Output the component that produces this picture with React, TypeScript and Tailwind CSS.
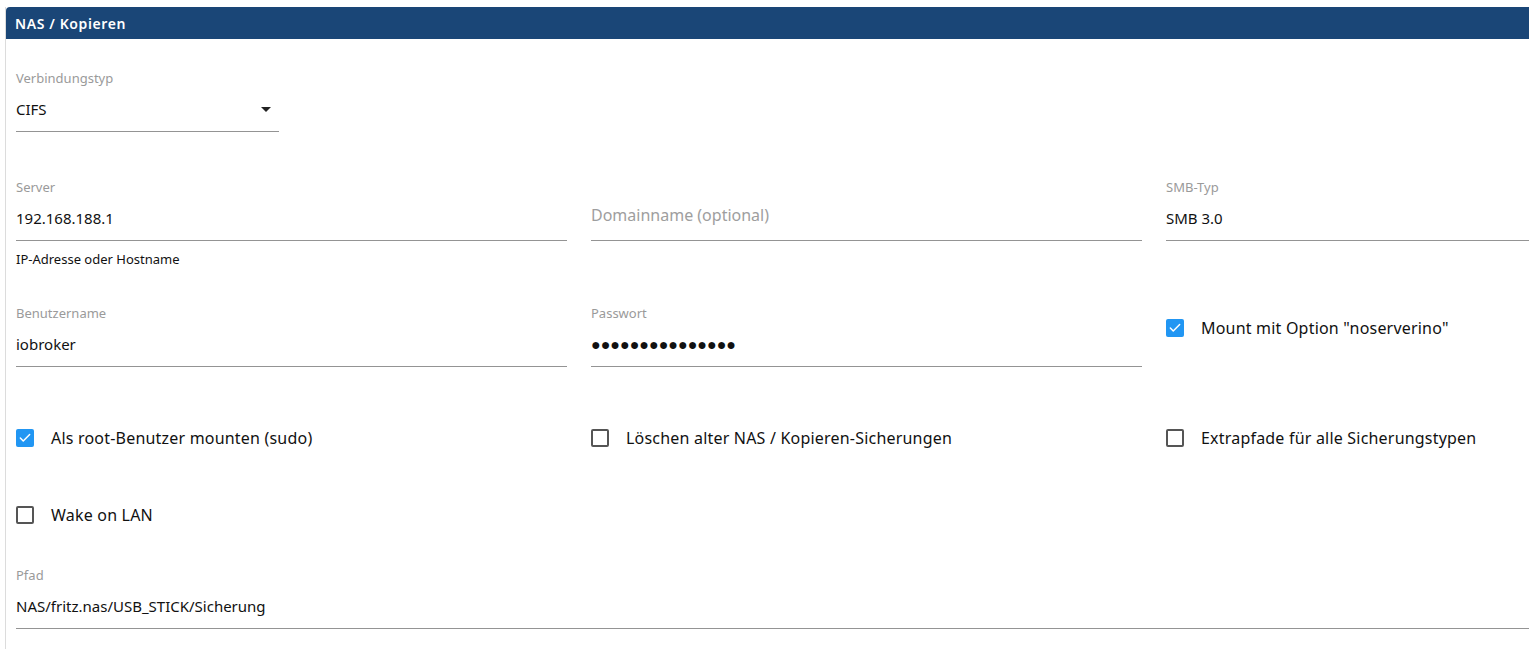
import { Check } from 'lucide-react';

const font = { fontFamily: '"Noto Sans", "Open Sans", Arial, sans-serif' };

function Field({
  label,
  value,
  placeholder,
  helper,
  select,
  valueClass,
}: {
  label?: string;
  value?: string;
  placeholder?: string;
  helper?: string;
  select?: boolean;
  valueClass?: string;
}) {
  return (
    <div className="w-full">
      {placeholder ? (
        <div className="h-[62px] border-b border-[#949494] pt-[26px]">
          <div className="h-5 leading-5 text-[16px] text-[#9e9e9e]">{placeholder}</div>
        </div>
      ) : (
        <>
          <div className="h-4 leading-4 text-[13px] text-[#9a9a9a]">{label}</div>
          <div
            className={`relative mt-[15px] h-4 leading-4 pb-[14px] box-content border-b border-[#949494] text-[#111] ${
              valueClass ?? 'text-[15px]'
            }`}
          >
            {value}
            {select && (
              <svg viewBox="0 0 24 24" className="absolute right-[1px] top-[-4px] w-6 h-6 fill-[#222]">
                <path d="M7 10l5 5 5-5z" />
              </svg>
            )}
          </div>
        </>
      )}
      {helper && <div className="mt-[10px] h-4 leading-4 text-[13px] text-[#111]">{helper}</div>}
    </div>
  );
}

function Box({ label, checked }: { label: string; checked?: boolean }) {
  return (
    <div className="flex items-center h-6">
      <div className="w-6 flex items-center justify-center">
        {checked ? (
          <div className="w-[18px] h-[18px] rounded-[2px] bg-[#2196f3] flex items-center justify-center">
            <Check size={14} strokeWidth={2.5} className="text-white" />
          </div>
        ) : (
          <div className="w-[18px] h-[18px] rounded-[2px] border-2 border-[#555]" />
        )}
      </div>
      <span className="ml-[14px] text-[16px] tracking-[0.2px] text-[#111]">{label}</span>
    </div>
  );
}

export default function App() {
  return (
    <div className="w-full min-h-[649px] bg-white overflow-hidden pt-[7px]" style={font}>
      <div className="w-[1740px] ml-[5px] border-l border-[#dcdcdc] min-h-[642px]">
        <div className="h-8 bg-[#1a4677] rounded-tl-[4px] flex items-center pl-[9px]">
          <span className="text-white text-[14px] font-semibold tracking-[0.6px]">NAS / Kopieren</span>
        </div>

        <div className="pl-[10px] pt-[31px]">
          <div className="w-[263px]">
            <Field label="Verbindungstyp" value="CIFS" select />
          </div>

          <div className="grid grid-cols-[551px_551px_551px] gap-x-6 mt-[47px]">
            <Field label="Server" value="192.168.188.1" helper="IP-Adresse oder Hostname" />
            <Field placeholder="Domainname (optional)" />
            <Field label="SMB-Typ" value="SMB 3.0" />
          </div>

          <div className="grid grid-cols-[551px_551px_551px] gap-x-6 mt-[38px]">
            <Field label="Benutzername" value="iobroker" />
            <Field label="Passwort" value="●●●●●●●●●●●●●●●" valueClass="text-[16px]" />
            <div className="pt-[11px] -ml-[3px]">
              <Box label={'Mount mit Option "noserverino"'} checked />
            </div>
          </div>

          <div className="grid grid-cols-[551px_551px_551px] gap-x-6 mt-[59px] -ml-[3px]">
            <Box label="Als root-Benutzer mounten (sudo)" checked />
            <Box label="Löschen alter NAS / Kopieren-Sicherungen" />
            <Box label="Extrapfade für alle Sicherungstypen" />
          </div>

          <div className="mt-[53px] -ml-[3px]">
            <Box label="Wake on LAN" />
          </div>

          <div className="mt-[40px]">
            <Field label="Pfad" value="NAS/fritz.nas/USB_STICK/Sicherung" />
          </div>
        </div>
      </div>
    </div>
  );
}
